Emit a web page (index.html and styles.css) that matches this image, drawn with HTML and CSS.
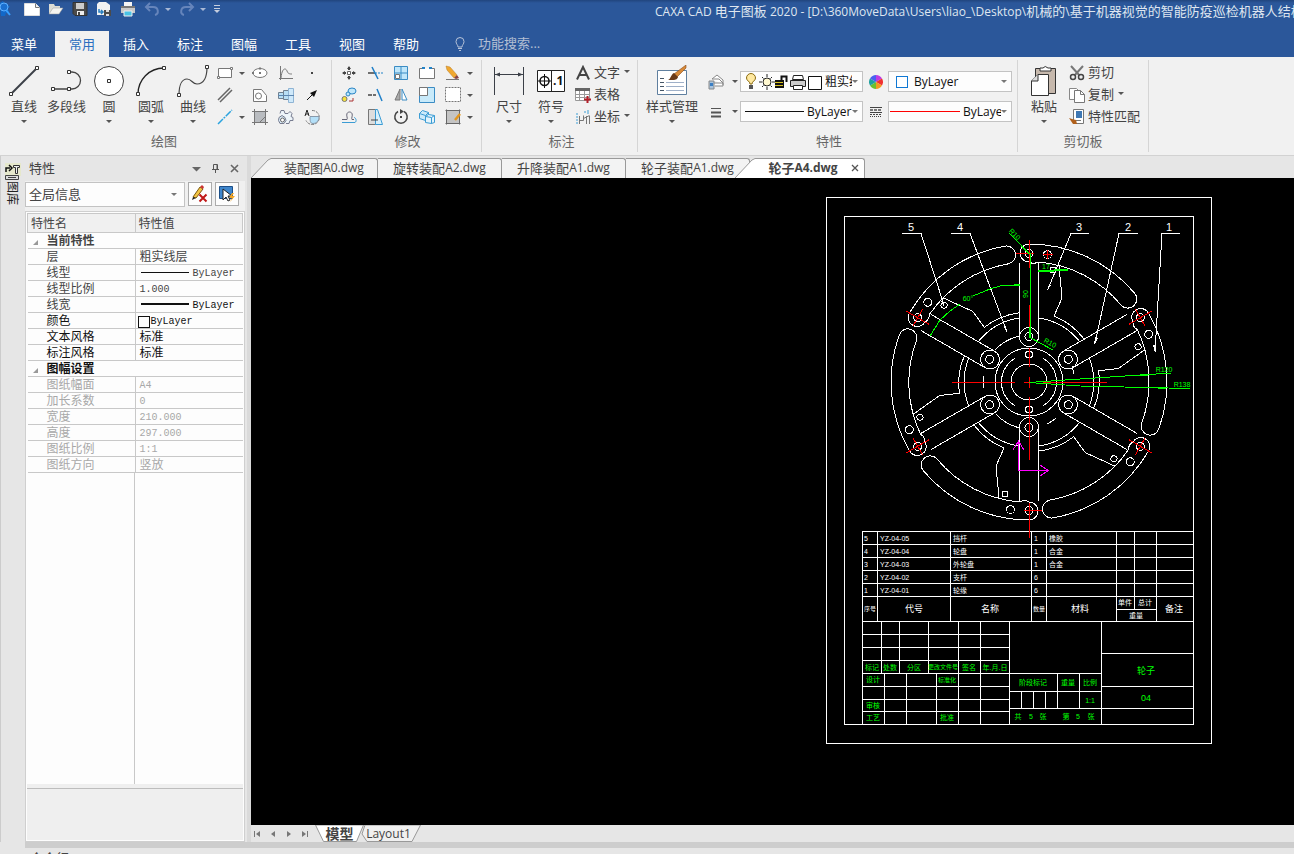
FILE: index.html
```html
<!DOCTYPE html>
<html lang="zh-CN">
<head>
    <meta charset="UTF-8">
    <meta name="viewport" content="width=device-width, initial-scale=1.0">
    <title>CAXA CAD 电子图板 2020</title>
    <link rel="stylesheet" href="styles.css">
</head>
<body>
    <header class="titlebar">
        <div class="title-row">
            <div class="quick">
                <svg class="app-logo" width="12" height="18" viewBox="0 0 12 18"><path d="M0 3l3-2 1 2 3 0 0 2 3 1-2 3 1 3-3 1-1 3-4 0z" fill="#1268c8"/><circle cx="4" cy="7" r="4" fill="#1a6fd0" stroke="#5fb0ff"/><path d="M6 10l4 5" stroke="#39a0ff" stroke-width="2"/></svg>
                <button aria-label="新建"><svg width="16" height="16" viewBox="0 0 16 16"><path d="M.5 2.500h11l4 4v8h-15z" fill="#fff" stroke="#ddd"/><path d="M11.500 2.500v4h4" fill="#eee" stroke="#777"/></svg></button>
                <button aria-label="打开"><svg width="16" height="16" viewBox="0 0 16 16"><path d="M1 13V3h5l1 2h5v2" fill="#dcdcd4"/><path d="M1 13l4-6h10l-4 6z" fill="#f4f4f0" stroke="#999" stroke-width=".5"/></svg></button>
                <button aria-label="保存"><svg width="16" height="16" viewBox="0 0 16 16"><path d="M1 1.500h14v13H3l-2-2z" fill="#4b4b4b" stroke="#333"/><path d="M4 2h8v6H4z" fill="#ccc"/><path d="M5 10h7v4H5z" fill="#eee"/><path d="M6 11h2v3H6z" fill="#444"/></svg></button>
                <button aria-label="另存为"><svg width="16" height="16" viewBox="0 0 16 16"><path d="M3 1h7l4 3v10H1V3z" fill="#f2f2f2"/><path d="M3 8v3h4M5 9l2 2-2 2" fill="none" stroke="#2a7fc0" stroke-width="1.500"/><path d="M8 9h7v6H8z" fill="#4b4b4b"/><path d="M10 9h3v2h-3zM10 13h3v2h-3z" fill="#ddd"/></svg></button>
                <button aria-label="打印"><svg width="16" height="16" viewBox="0 0 16 16"><path d="M4 1h8v5H4z" fill="#f5f5f5"/><path d="M1 5h14v7H1z" fill="#c9c9c9"/><path d="M1 5h14v2H1z" fill="#777"/><path d="M4 10h8v5H4z" fill="#49c3e6" stroke="#eee"/></svg></button>
                <button class="dim" aria-label="撤销"><svg width="16" height="16" viewBox="0 0 16 16"><path d="M6 2L2 6l4 4M2 6h7c6 0 6 7 2 8" fill="none" stroke="#6685bb" stroke-width="2"/></svg><i class="caret light"></i></button>
                <button class="dim" aria-label="恢复"><svg width="16" height="16" viewBox="0 0 16 16"><path d="M10 2l4 4-4 4M14 6H7c-6 0-6 7-2 8" fill="none" stroke="#6685bb" stroke-width="2"/></svg><i class="caret light"></i></button>
                <button class="more" aria-label="自定义"><svg width="6" height="10" viewBox="0 0 6 10"><path d="M0 1.500h6M0 4.500h6" stroke="#c5cede"/><path d="M0 6h6L3 9z" fill="#c5cede"/></svg></button>
            </div>
            <div class="caption"><small>CAXA CAD </small>电子图板<small> 2020 - [D:\360MoveData\Users\liao_\Desktop\</small>机械的<small>\</small>基于机器视觉的智能防疫巡检机器人结构设计</div>
        </div>
        <nav class="menu">
            <button class="menu-file">菜单</button>
            <button class="active">常用</button>
            <button>插入</button>
            <button>标注</button>
            <button>图幅</button>
            <button>工具</button>
            <button>视图</button>
            <button>帮助</button>
            <label class="search">
                <svg width="12" height="14" viewBox="0 0 12 14"><path d="M4 10C4 8 2 7 2 4.500a4 4 0 0 1 8 0C10 7 8 8 8 10zM4 11.500h4M5 13.500h2" fill="none" stroke="#b7c3d9"/></svg>
                <input type="text" placeholder="功能搜索..." aria-label="功能搜索">
            </label>
        </nav>
    </header>

    <section class="ribbon">
        <!-- 绘图 -->
        <div class="group draw">
            <div class="group-body">
                <button class="big"><svg width="32" height="32" viewBox="0 0 32 32"><path d="M3 29L29 3" stroke="#3c4048" stroke-width="2"/><path d="M1.500 27.500h3v3h-3zM27.500 1.500h3v3h-3z" class="node"/></svg><span>直线</span><i class="caret"></i></button>
                <button class="big mid"><svg width="32" height="32" viewBox="0 0 32 32"><path d="M2 24h16M18 7h3a8.500 8.500 0 0 1 0 17h-3" fill="none" stroke="#444" stroke-width="1.300"/><path d="M.5 22.500h3v3h-3zM16.500 22.500h3v3h-3zM16.500 5.500h3v3h-3z" class="node"/></svg><span>多段线</span></button>
                <button class="big"><svg width="32" height="32" viewBox="0 0 32 32"><circle cx="16" cy="16" r="14.500" fill="#fff" stroke="#444"/><path d="M14.500 14.500h3v3h-3z" class="node"/></svg><span>圆</span><i class="caret"></i></button>
                <button class="big"><svg width="32" height="32" viewBox="0 0 32 32"><path d="M3 29C3 15 14 3 29 3" fill="none" stroke="#222" stroke-width="1.300"/><path d="M1.500 27.500h3v3h-3zM27.500 1.500h3v3h-3z" class="node"/></svg><span>圆弧</span><i class="caret"></i></button>
                <button class="big"><svg width="32" height="32" viewBox="0 0 32 32"><path d="M2 30C2 20 5 14 10 14s5 5 10 5c7 0 10-7 10-17" fill="none" stroke="#444" stroke-width="1.200"/><path d="M.5 28.500h3v3h-3zM28.500.5h3v3h-3z" class="node"/></svg><span>曲线</span><i class="caret"></i></button>
                <div class="icons">
                    <button aria-label="矩形"><svg width="16" height="16" viewBox="0 0 16 16"><path d="M1.500 3.500h13v9h-13z" fill="#fff" stroke="#777"/><path d="M.5 11.500h2v2h-2zM13.500 2.500h2v2h-2z" fill="#fff" stroke="#777"/></svg><i class="caret"></i></button>
                    <button aria-label="椭圆"><svg width="16" height="16" viewBox="0 0 16 16"><ellipse cx="8" cy="8" rx="7" ry="4.500" fill="#fff" stroke="#777"/><path d="M7 7h2v2H7zM7 2.500h2v2H7zM0 7h2v2H0z" fill="#777"/></svg></button>
                    <button aria-label="公式曲线"><svg width="16" height="16" viewBox="0 0 16 16"><path d="M2.500 1v14M1 13.500h14M3 13C4 2 8 3 9 6s3 3 5 3" fill="none" stroke="#777"/></svg></button>
                    <button aria-label="点"><svg width="16" height="16" viewBox="0 0 16 16"><path d="M7 7h2v2H7z" fill="#444"/></svg></button>
                    <button aria-label="平行线"><svg width="16" height="16" viewBox="0 0 16 16"><path d="M1 13L13 1M3 15L15 3" stroke="#666" stroke-width="1.500"/></svg></button>
                    <button aria-label="轮廓"><svg width="16" height="16" viewBox="0 0 16 16"><path d="M1.500 2.500h8l5 6v6h-13z" fill="#fff" stroke="#777"/><circle cx="6.500" cy="9" r="3" fill="none" stroke="#777"/></svg></button>
                    <button aria-label="孔轴"><svg width="16" height="16" viewBox="0 0 16 16"><path d="M.5 5.500h5v6h-5zM5.500 3.500h5v9h-5z" fill="#b9dff5" stroke="#708090"/><path d="M10.500 1.500h5v14h-5z" fill="#cfe9fa" stroke="#8fb4d4"/><path d="M0 8.500h16" stroke="#5d86b0"/></svg></button>
                    <button aria-label="箭头"><svg width="16" height="16" viewBox="0 0 16 16"><path d="M3 13l5-5" stroke="#111"/><path d="M13 3l-7 3 4 4z" fill="#111"/></svg></button>
                    <button aria-label="构造线"><svg width="16" height="16" viewBox="0 0 16 16"><path d="M1 15L15 1" stroke="#2aa3df" stroke-width="1.500" stroke-dasharray="7 1 2 1"/></svg><i class="caret"></i></button>
                    <button aria-label="填充"><svg width="16" height="16" viewBox="0 0 16 16"><path d="M2 2h12v12H2z" fill="#b9bcc0"/><path d="M2.500 0v16M13.500 0v16M0 2.500h16M0 13.500h16M8 13L13 8" stroke="#777"/></svg></button>
                    <button aria-label="齿形"><svg width="16" height="16" viewBox="0 0 16 16"><path d="M2 4.500l1-3h3l1 3h3l2-2 2 2-1 3 2 1v3h-3l-1 3h-3" fill="#eef5fa" stroke="#777c90"/><path d="M1 8.500l3-2 3 2 1 3-2 3H2l-1.500-3z" fill="#dceefa" stroke="#777c90"/><circle cx="4.500" cy="11" r="2" fill="#fff" stroke="#666"/></svg></button>
                    <button aria-label="局部放大图"><svg width="16" height="16" viewBox="0 0 16 16"><path d="M8 1.500a7 7 0 1 1-6 10" fill="none" stroke="#777" stroke-dasharray="3 1"/><path d="M6 7.500h9c0 5-3 7-6 7s-3-3-3-7z" fill="#b4e0f8" stroke="#89a"/><path d="M1 7l2-6 2 6M2 5h3" fill="none" stroke="#222"/></svg></button>
                </div>
            </div>
            <div class="group-title">绘图</div>
        </div>

        <!-- 修改 -->
        <div class="group modify">
            <div class="group-body">
                <div class="icons">
                    <button aria-label="平移"><svg width="16" height="16" viewBox="0 0 16 16"><path d="M8 2v3M8 11v3M2 8h3M11 8h3" stroke="#444" stroke-width="2"/><path d="M6 4l2-3 2 3zM6 12l2 3 2-3zM4 6L1 8l3 2zM12 6l3 2-3 2z" fill="#444"/><path d="M6.500 6.500h3v3h-3z" fill="#fff" stroke="#666"/></svg></button>
                    <button aria-label="裁剪"><svg width="16" height="16" viewBox="0 0 16 16"><path d="M1 8h7" stroke="#444" stroke-width="1.500"/><path d="M8 8h8" stroke="#2383c8" stroke-dasharray="2 1"/><path d="M5 2l6 12" stroke="#1f7fc8" stroke-width="1.500"/></svg></button>
                    <button aria-label="阵列"><svg width="16" height="16" viewBox="0 0 16 16"><path d="M1.500 1.500h13v13h-13zM8 1v14M1 8h14" fill="#bfe6fa" stroke="#3b8cc4"/><path d="M2.500 9.500h4v4h-4z" fill="#fff" stroke="#777"/></svg></button>
                    <button aria-label="打断"><svg width="16" height="16" viewBox="0 0 16 16"><path d="M5 3.500H.5v10h15v-10H11" fill="#fff" stroke="#777"/><path d="M3 2h3v2H3zM10 2h3v2h-3z" fill="#2383c8"/></svg></button>
                    <button aria-label="删除"><svg width="16" height="16" viewBox="0 0 16 16"><path d="M1 1l4 1 7 8-3 3-7-8z" fill="#f0a830" stroke="#b97a20" stroke-width=".5"/><path d="M12 10l2 3-3 1-2-1z" fill="#844"/><path d="M1 14.500h13" stroke="#777"/></svg><i class="caret"></i></button>
                    <button aria-label="平移复制"><svg width="16" height="16" viewBox="0 0 16 16"><ellipse cx="11" cy="4" rx="4" ry="3" fill="#bfe6fa" stroke="#2a86c6"/><circle cx="7" cy="7" r="2" fill="#bfe6fa" stroke="#2a86c6"/><circle cx="3.500" cy="12" r="2.500" fill="#f7e23a" stroke="#777"/><path d="M8 14h4v-3" fill="none" stroke="#a33"/></svg></button>
                    <button aria-label="延伸"><svg width="16" height="16" viewBox="0 0 16 16"><path d="M1 8h8" stroke="#444" stroke-width="1.500" stroke-dasharray="4 1"/><path d="M10 2l5 12" stroke="#1f7fc8" stroke-width="1.500"/></svg></button>
                    <button aria-label="镜像"><svg width="16" height="16" viewBox="0 0 16 16"><path d="M7 2v11H2z" fill="#aaa" stroke="#777"/><path d="M9 2v11h5z" fill="#fff" stroke="#3b8cc4"/></svg></button>
                    <button aria-label="缩放"><svg width="16" height="16" viewBox="0 0 16 16"><path d="M.5.5h15v15H.5z" fill="#c8eafa" stroke="#3b8cc4"/><path d="M.5.5h8v8h-8z" fill="#fff" stroke="#777"/></svg></button>
                    <button aria-label="分解"><svg width="16" height="16" viewBox="0 0 16 16"><path d="M.5.5h15v14H.5z" fill="#fff" stroke="#777" stroke-dasharray="2 1"/></svg><i class="caret"></i></button>
                    <button aria-label="等距线"><svg width="16" height="16" viewBox="0 0 16 16"><path d="M1 10.500h5c1-1-1-4 0-6s4-2 5 0-1 5 0 6h2" fill="none" stroke="#667"/><path d="M1 13.500h13c2-1 1-5-1-5" fill="none" stroke="#3b9cd4"/></svg></button>
                    <button aria-label="拉伸"><svg width="16" height="16" viewBox="0 0 16 16"><path d="M1.500.5h7v15h-7z" fill="#ddd" stroke="#777"/><path d="M8.500.5h2l5 15h-7z" fill="#d8f0fc" stroke="#3b9cd4"/><path d="M4 11h7" stroke="#444"/></svg></button>
                    <button aria-label="旋转"><svg width="16" height="16" viewBox="0 0 16 16"><path d="M11 2.500A6.200 6.200 0 1 1 5 2.500" fill="none" stroke="#444" stroke-width="1.500"/><path d="M7 0l4 2.500L7 5z" fill="#444"/><path d="M7 7h2v2H7z" fill="#444"/></svg></button>
                    <button aria-label="块"><svg width="16" height="16" viewBox="0 0 16 16"><path d="M.5 4.500l3-3 6 2v6l-3 2-6-2zM.5 4.500l6 2v5M6.500 6.500l3-3" fill="#cdeafa" stroke="#3b9cd4"/><path d="M6.500 7.500l3-2 6 1v7l-3 1-6-1zM6.500 7.500l6 1v6M12.500 8.500l3-2" fill="#e4f4fc" stroke="#3b9cd4"/></svg></button>
                    <button aria-label="填充编辑"><svg width="16" height="16" viewBox="0 0 16 16"><path d="M2 2h12v12H2z" fill="#c4c4c4"/><path d="M1.500.5v15M14.500.5v15M.5 1.500h15M.5 14.500h15" stroke="#666"/><path d="M15 5l-5 6" stroke="#e2961e" stroke-width="2.500"/></svg><i class="caret"></i></button>
                </div>
            </div>
            <div class="group-title">修改</div>
        </div>

        <!-- 标注 -->
        <div class="group dims">
            <div class="group-body">
                <button class="big"><svg width="32" height="32" viewBox="0 0 32 32"><path d="M1.500 2v28M30.500 2v28M2 9.500h28" stroke="#3c4048"/><path d="M2 9.500l5-2v4zM30 9.500l-5-2v4z" fill="#3c4048"/></svg><span>尺寸</span><i class="caret"></i></button>
                <button class="big"><svg width="32" height="32" viewBox="0 0 32 32"><path d="M2.500 5.500h27v21h-27zM16.500 5v22" fill="#fff" stroke="#222"/><circle cx="9.500" cy="16" r="4.500" fill="none" stroke="#111" stroke-width="1.500"/><path d="M3 16h13M9.500 9v14" stroke="#111"/><text x="18" y="20" class="tol">.1</text></svg><span>符号</span><i class="caret"></i></button>
                <div class="rows">
                    <button><svg width="16" height="16" viewBox="0 0 16 16"><path d="M2 14.500L8 2l6 12.500M4.500 10h7" fill="none" stroke="#444" stroke-width="2"/></svg>文字<i class="caret"></i></button>
                    <button><svg width="16" height="16" viewBox="0 0 16 16"><path d="M.5 1.500h14v12H.5zM.5 7.500h14M.5 10.500h14M4.500 4v9M9.500 4v9" fill="#fff" stroke="#999"/><path d="M0 1h15v3H0z" fill="#666"/><path d="M12.500 9v7M9 12.500h7" stroke="#b3202a" stroke-width="2"/></svg>表格</button>
                    <button><svg width="16" height="16" viewBox="0 0 16 16"><path d="M4.500 7v8M4.500 11.500h4v-5M8.500 9.500l6-3M11.500 7v8M14.500 7v8" fill="none" stroke="#777"/><path d="M2 4v11" stroke="#3b9cd4" stroke-dasharray="2 1"/><path d="M13 1v4M9 3h2" stroke="#3b9cd4"/></svg>坐标<i class="caret"></i></button>
                </div>
            </div>
            <div class="group-title">标注</div>
        </div>

        <!-- 特性 -->
        <div class="group props">
            <div class="group-body">
                <button class="big wide"><svg width="32" height="32" viewBox="0 0 32 32"><path d="M1.500 5.500h29v24h-29z" fill="#fff" stroke="#5f7f9f"/><path d="M4 13.500h4M4 17.500h4M4 21.500h4M4 25.500h4" stroke="#456"/><path d="M10 17.500h18M10 21.500h18M10 25.500h18" stroke="#9fb0c8"/><path d="M30 0l-12 9 3 3 9-9z" fill="#d88a38" stroke="#8a4a18" stroke-width=".6"/><path d="M18 8l4 4c-1 4-6 3-10 3 3-1 3-6 6-7z" fill="#6a3a18"/></svg><span>样式管理</span><i class="caret"></i></button>
                <div class="prop-grid">
                    <button class="with-caret" aria-label="图层"><svg width="16" height="16" viewBox="0 0 16 16"><path d="M4 5l5-4 6 5v5M4 5h7l4 4M6 9h9v3H7" fill="#fff" stroke="#888"/><path d="M1 7h5v8H1z" fill="#aac4dc" stroke="#888"/><path d="M2 9h3v3H2z" fill="#3b7fc4"/></svg><i class="caret"></i></button>
                    <div class="combo">
                        <svg width="80" height="18" viewBox="0 0 80 18">
                            <path d="M5 11C5 8 1.500 8 1.500 5a4.500 4.500 0 0 1 9 0C10.500 8 7 8 7 11z" fill="#ffe9a0" stroke="#8a6a10"/><path d="M4 12h4v4H4z" fill="#555"/>
                            <circle cx="22" cy="9" r="4" fill="#fff8d0" stroke="#222"/><path d="M22 1v3M22 14v3M14 9h3M27 9h3M17 4l1.500 1.500M27 4l-1.500 1.500M17 14l1.500-1.500M27 14l-1.500-1.500" stroke="#222"/>
                            <path d="M30 7h9v8h-9z" fill="#111"/><path d="M30 9.500h8M30 12.500h8" stroke="#d8c020"/><path d="M36.500 7V3.500h5V9" fill="none" stroke="#111" stroke-width="2"/>
                            <path d="M48.500 2.500h9l1 4h-11z" fill="#fff" stroke="#222"/><path d="M45.500 7.500h15v6h-15z" fill="#ccc" stroke="#222"/><path d="M48.500 12.500h9v4h-9z" fill="#fff" stroke="#222"/>
                            <path d="M63.500 3.500h13v13h-13z" fill="#fff" stroke="#111"/>
                        </svg>
                        <select aria-label="当前图层"><option>粗实线层</option></select><i class="caret"></i>
                    </div>
                    <svg class="mid-icon" width="14" height="14" viewBox="0 0 14 14"><path d="M7 7V0a7 7 0 0 1 6 3.500z" fill="#c03be0"/><path d="M7 7l6-3.500a7 7 0 0 1 0 7z" fill="#f03030"/><path d="M7 7l6 3.500A7 7 0 0 1 7 14z" fill="#f39a20"/><path d="M7 7v7a7 7 0 0 1-6-3.500z" fill="#6cc030"/><path d="M7 7l-6 3.500a7 7 0 0 1 0-7z" fill="#20a0a0"/><path d="M7 7L1 3.500A7 7 0 0 1 7 0z" fill="#4a60f0"/></svg>
                    <div class="combo">
                        <i class="swatch"></i>
                        <select aria-label="颜色"><option>ByLayer</option></select><i class="caret"></i>
                    </div>
                    <button class="with-caret" aria-label="线宽"><svg width="16" height="16" viewBox="0 0 16 16"><path d="M3 4.500h10" stroke="#555"/><path d="M3 8.500h10M3 12.500h10" stroke="#555" stroke-width="2"/></svg><i class="caret"></i></button>
                    <div class="combo">
                        <i class="line black"></i>
                        <select aria-label="线宽设置"><option>ByLayer</option></select><i class="caret"></i>
                    </div>
                    <svg class="mid-icon" width="14" height="14" viewBox="0 0 14 14"><path d="M1 2.500h12M1 7.500h12" stroke="#444"/><path d="M1 5h12" stroke="#777" stroke-width="2" stroke-dasharray="3 1"/><path d="M1 9.500h12" stroke="#444" stroke-dasharray="2 1"/><path d="M1 11.500h12" stroke="#444" stroke-dasharray="1 1"/></svg>
                    <div class="combo">
                        <i class="line red"></i>
                        <select aria-label="线型设置"><option>ByLayer</option></select><i class="caret"></i>
                    </div>
                </div>
            </div>
            <div class="group-title">特性</div>
        </div>

        <!-- 剪切板 -->
        <div class="group clip">
            <div class="group-body">
                <button class="big"><svg width="32" height="32" viewBox="0 0 32 32"><path d="M7.500 3.500h20v25h-20z" fill="#c6b8ac" stroke="#333"/><path d="M12 6V3h3q2-3 5 0h3v3z" fill="#fff" stroke="#333"/><path d="M10 9.500h10.500v21h-17V16z" fill="#fff" stroke="#333"/><path d="M10 9.500V16H3.500" fill="#ddd" stroke="#333"/></svg><span>粘贴</span><i class="caret"></i></button>
                <div class="rows">
                    <button><svg width="16" height="16" viewBox="0 0 16 16"><path d="M2 1l9 10M14 1L5 11" stroke="#777" stroke-width="2"/><circle cx="4" cy="12" r="2.500" fill="#eee" stroke="#444" stroke-width="1.500"/><circle cx="12" cy="12" r="2.500" fill="#eee" stroke="#444" stroke-width="1.500"/></svg>剪切</button>
                    <button><svg width="16" height="16" viewBox="0 0 16 16"><path d="M.5 1.500h7l3 3v8H.5z" fill="#fff" stroke="#888"/><path d="M5.500 3.500h6l4 4v8h-10z" fill="#fff" stroke="#777"/><path d="M11.500 3.500v4h4" fill="none" stroke="#777"/></svg>复制<i class="caret"></i></button>
                    <button><svg width="16" height="16" viewBox="0 0 16 16"><path d="M4.500.5h10v14h-10z" fill="#fff" stroke="#777"/><path d="M7 2h6v7H7z" fill="#3f78b4"/><path d="M6 11.500h6" stroke="#777"/><path d="M0 9l3 1 4 1 1 4H4z" fill="#b0601c"/></svg>特性匹配</button>
                </div>
            </div>
            <div class="group-title">剪切板</div>
        </div>
    </section>

    <div class="workspace">
        <aside class="strip">
            <svg width="16" height="18" viewBox="0 0 16 18"><path d="M0 0h16v13H0z" fill="#e6e8cc"/><path d="M1 9V5h4M4 2l3 3-3 3" fill="none" stroke="#111" stroke-width="1.500"/><path d="M8.500 2.500h6v2h-2v6h-2v-6h-2z" fill="#eee" stroke="#333"/><path d="M.5 12.500h13v4H.5zM3 14.500h8" fill="#ddd" stroke="#444"/></svg>
            <span>图库</span>
        </aside>

        <section class="panel">
            <div class="panel-title">
                <span>特性</span>
                <button aria-label="选项"><svg width="9" height="9" viewBox="0 0 9 9"><path d="M0 3h9L4.500 7.500z" fill="#666"/></svg></button>
                <button aria-label="固定"><svg width="9" height="9" viewBox="0 0 9 9"><path d="M2.500 5V.5h4V5M1 5.500h7M4.500 6v3M6 1v4" fill="none" stroke="#555"/></svg></button>
                <button aria-label="关闭"><svg width="9" height="9" viewBox="0 0 9 9"><path d="M1 1l7 7M8 1L1 8" stroke="#666" stroke-width="1.600"/></svg></button>
            </div>
            <div class="panel-tools">
                <div class="combo">
                    <select aria-label="选择对象"><option>全局信息</option></select><i class="caret"></i>
                </div>
                <button aria-label="清除"><svg width="18" height="18" viewBox="0 0 18 18"><path d="M2 12L9 2l3 2L5 13z" fill="#f3c342" stroke="#7a5a10"/><path d="M2 12l-1 3 4-2z" fill="#222"/><path d="M9 2l2-2 2 2-1 2z" fill="#c33"/><path d="M8.500 9.500l7 7M15.500 9.500l-7 7" stroke="#c01818" stroke-width="2"/></svg></button>
                <button aria-label="快速选择"><svg width="18" height="18" viewBox="0 0 18 18"><path d="M1.500 1.500h13v12h-13z" fill="#3f86cc" stroke="#1d4f88"/><path d="M5 4v11l3-3 2 4 2-1-2-4h4z" fill="#fff" stroke="#222"/><path d="M14 8l-3 5h3l-2 4 5-6h-3l2-3z" fill="#f5a623"/></svg></button>
            </div>
            <div class="prop-box">
                <table>
                    <thead>
                        <tr><th>特性名</th><th>特性值</th></tr>
                    </thead>
                    <tbody>
                        <tr class="section first"><td colspan="2"><i></i>当前特性</td></tr>
                        <tr class="soft"><td>层</td><td>粗实线层</td></tr>
                        <tr class="soft"><td>线型</td><td><span class="sample"></span><span class="mono">ByLayer</span></td></tr>
                        <tr class="soft"><td>线型比例</td><td><span class="mono">1.000</span></td></tr>
                        <tr class="soft"><td>线宽</td><td><span class="sample thick"></span><span class="mono dark">ByLayer</span></td></tr>
                        <tr><td>颜色</td><td class="tight"><span class="box"></span><span class="mono">ByLayer</span></td></tr>
                        <tr><td>文本风格</td><td>标准</td></tr>
                        <tr><td>标注风格</td><td>标准</td></tr>
                        <tr class="section"><td colspan="2"><i></i>图幅设置</td></tr>
                        <tr class="off"><td>图纸幅面</td><td><span class="mono">A4</span></td></tr>
                        <tr class="off"><td>加长系数</td><td><span class="mono">0</span></td></tr>
                        <tr class="off"><td>宽度</td><td><span class="mono">210.000</span></td></tr>
                        <tr class="off"><td>高度</td><td><span class="mono">297.000</span></td></tr>
                        <tr class="off"><td>图纸比例</td><td><span class="mono">1:1</span></td></tr>
                        <tr class="off"><td>图纸方向</td><td>竖放</td></tr>
                    </tbody>
                </table>
                <div class="filler"><div></div></div>
                <div class="hint"></div>
            </div>
        </section>

        <div class="splitter"></div>

        <main class="main">
            <div class="doc-tabs">
                <button class="slanted"><svg width="20" height="20" viewBox="0 0 20 20"><path d="M0 20L17 2 20 .5V20z" fill="#f3f3f3"/><path d="M0 20L17 2 20 .5" fill="none" stroke="#999"/></svg><span>装配图<small>A0.dwg</small></span></button>
                <button><span>旋转装配<small>A2.dwg</small></span></button>
                <button><span>升降装配<small>A1.dwg</small></span></button>
                <button><span>轮子装配<small>A1.dwg</small></span></button>
                <button class="slanted current"><svg width="20" height="20" viewBox="0 0 20 20"><path d="M0 20L17 2 20 .5V20z" fill="#fff"/><path d="M0 20L17 2 20 .5" fill="none" stroke="#999"/></svg><span>轮子<small>A4.dwg</small><svg width="8" height="8" viewBox="0 0 8 8"><path d="M1 1l6 6M7 1L1 7" stroke="#555" stroke-width="1.300"/></svg></span></button>
            </div>
            <div class="canvas">
                <svg class="sheet" width="388" height="548" viewBox="825 196 388 548">
                    <defs>
                        <!-- one sixth of the wheel, centre at 0,0 -->
                        <g id="sector">
                            <path d="M0-138A138 138 0 0 1 105.700-88.700A9 9 0 0 1 91.900-77.100A120 120 0 0 0 9-120A9 9 0 0 1 0-120A9 9 0 0 1 0-138"/>
                            <circle cx="0" cy="-128.500" r="4"/>
                            <circle cx="18.500" cy="-127.500" r="4"/>
                            <circle cx="24" cy="-112" r="3"/>
                            <path d="M-9.500-119V-45A9.500 9.500 0 0 0 9.500-45V-119M-9.500-45A9.500 9.500 0 0 1 9.500-45"/>
                            <circle cx="0" cy="-45.500" r="4"/>
                            <path d="M30-116L33-84L25-66A70 70 0 0 1 55-43M10-64A65 65 0 0 1 51-40"/>
                        </g>
                        <path id="mark" d="M0-142V-115M-10-128.500H10"/>
                    </defs>
                    <g class="white">
                        <path d="M826.500 197.500h385v546h-385zM844.500 216.500h349v508h-349z"/>
                        <g transform="translate(1029 382)">
                            <use href="#sector"/>
                            <use href="#sector" transform="rotate(60)"/>
                            <use href="#sector" transform="rotate(120)"/>
                            <use href="#sector" transform="rotate(180)"/>
                            <use href="#sector" transform="rotate(240)"/>
                            <use href="#sector" transform="rotate(300)"/>
                            <circle r="18"/>
                            <circle r="34"/>
                            <path d="M-14-24A28 28 0 0 0-14 24M14-24A28 28 0 0 1 14 24"/>
                            <circle cy="-27.500" r="3.500"/>
                            <circle cy="27.500" r="3.500"/>
                            <path d="M-34-32A47 47 0 0 1-9-46M-33 32A46 46 0 0 0-9 46M-46-6V6M18 42Q24 39 27 36M43-16L45-8"/>
                        </g>
                        <path d="M902 233.500h19L944 305M951 233.500h19L1007 332M1089 233.500h-18L1048 289M1138 233.500h-19L1095 343M1180 233.500h-18L1155 352"/>
                        <path class="tip" d="M944 307l-3-6 2-1zM1007 333l-3-6 2-1zM1047 291l2-7 2 1zM1094 345l1-8 3 1zM1155 353l-2-8h3z"/>
                        <!-- parts list -->
                        <path d="M862.500 724V531.500h331M862.500 544.500h331M862.500 557.500h331M862.500 570.500h331M862.500 583.500h331M862.500 596.500h331M862.500 621.500h331M877.500 531v90M950.500 531v90M1031.500 531v90M1046.500 531v90M1116.500 531v90M1134.500 531v78M1156.500 531v90M1116.500 609.500h40"/>
                        <!-- title block -->
                        <path d="M862.500 634.500h147M862.500 647.500h147M862.500 660.500h147M862.500 673.500h239M862.500 686.500h147M862.500 699.500h147M862.500 711.500h147M881.500 621v52M899.500 621v52M928.500 621v52M958.500 621v103M980.500 621v103M1009.500 621v103M884.500 673v51M906.500 673v51M936.500 673v51"/>
                        <path d="M1101.500 621v103M1009.500 691.500h92M1009.500 708.500h184M1057.500 673v35M1079.500 673v35M1021.500 691v17M1033.500 691v17M1045.500 691v17M1101.500 653.500h92M1101.500 686.500h92"/>
                    </g>
                    <g class="red">
                        <g transform="translate(1029 382)">
                            <use href="#mark" transform="rotate(60)"/>
                            <use href="#mark" transform="rotate(120)"/>
                            <use href="#mark" transform="rotate(240)"/>
                            <use href="#mark" transform="rotate(300)"/>
                        </g>
                        <path d="M952 382.500h63M1024 382.500h11M1043 382.500h64M1029.500 240v28M1029.500 305v32M1029.500 348v19M1029.500 377v11M1029.500 397v63M1029.500 503v35M1016 253.500h18M1024 510.500h18M1043 254.500h10M1047.500 250v9"/>
                    </g>
                    <g class="green">
                        <path d="M1009 233L1029.500 254M1030.500 253v85M930 336L940 320L950 311L960 304M973 296L990 289L1000 286L1019 285M1029 337L1053 350M1029 382.500L1080 379L1171 373M1029 382.500L1080 386L1190 388.500"/>
                        <path class="bold" d="M1038 270.500h16M1054 269.500h14M1030 327v10M1140 374.500h8M1158 388h8M1014 284.500h6"/>
                    </g>
                    <g class="magenta">
                        <path d="M1018.500 441V470.500H1048M1013 450L1018.500 441L1024 450M1040 465L1048.500 470.500L1040 476"/>
                    </g>
                    <g class="cad num">
                        <text x="911" y="231">5</text><text x="960" y="231">4</text><text x="1079" y="231">3</text><text x="1128" y="231">2</text><text x="1169" y="231">1</text>
                    </g>
                    <g class="cad lime">
                        <text transform="translate(1013 236) rotate(45)">R10</text>
                        <text transform="translate(1028 294) rotate(-90)">90</text>
                        <text x="968" y="301">60°</text>
                        <text x="1046" y="269">17</text>
                        <text transform="translate(1049 345) rotate(28)">R10</text>
                        <text x="1164" y="372">R120</text>
                        <text x="1182" y="387">R138</text>
                    </g>
                    <g class="cad left">
                        <text x="864" y="541">5</text><text x="880" y="541">YZ-04-05</text><text x="953" y="541">挡杆</text><text x="1034" y="541">1</text><text x="1049" y="541">橡胶</text>
                        <text x="864" y="554">4</text><text x="880" y="554">YZ-04-04</text><text x="953" y="554">轮盘</text><text x="1034" y="554">1</text><text x="1049" y="554">合金</text>
                        <text x="864" y="567">3</text><text x="880" y="567">YZ-04-03</text><text x="953" y="567">外轮盘</text><text x="1034" y="567">1</text><text x="1049" y="567">合金</text>
                        <text x="864" y="580">2</text><text x="880" y="580">YZ-04-02</text><text x="953" y="580">支杆</text><text x="1034" y="580">6</text>
                        <text x="864" y="593">1</text><text x="880" y="593">YZ-04-01</text><text x="953" y="593">轮缘</text><text x="1034" y="593">6</text>
                    </g>
                    <g class="cad">
                        <text class="tiny" x="870" y="611">序号</text><text class="tiny" x="1039" y="611">数量</text><text x="1125" y="605">单件</text><text x="1145" y="605">总计</text><text x="1136" y="618">重量</text>
                    </g>
                    <g class="cad head">
                        <text x="914" y="612">代号</text><text x="990" y="612">名称</text><text x="1080" y="612">材料</text><text x="1174" y="612">备注</text>
                    </g>
                    <g class="cad lime">
                        <text x="872" y="670">标记</text><text x="890" y="670">处数</text><text x="914" y="670">分区</text><text class="tiny" x="943" y="669">更改文件号</text><text x="969" y="670">签名</text><text x="995" y="670">年.月.日</text>
                        <text x="873" y="682">设计</text><text class="tiny" x="947" y="682">标准化</text><text x="873" y="708">审核</text><text x="873" y="720">工艺</text><text x="947" y="720">批准</text>
                        <text x="1033" y="685">阶段标记</text><text x="1068" y="685">重量</text><text x="1090" y="685">比例</text><text x="1090" y="703">1:1</text>
                        <text x="1018" y="719">共</text><text x="1031" y="719">5</text><text x="1043" y="719">张</text><text x="1066" y="719">第</text><text x="1078" y="719">5</text><text x="1091" y="719">张</text>
                    </g>
                    <g class="cad head lime">
                        <text x="1146" y="674">轮子</text><text x="1146" y="701">04</text>
                    </g>
                </svg>
            </div>
            <div class="layout-tabs">
                <button aria-label="第一个"><svg width="8" height="8" viewBox="0 0 8 8"><path d="M1.500 1v6" stroke="#777"/><path d="M7 1v6L3 4z" fill="#777"/></svg></button>
                <button aria-label="上一个"><svg width="8" height="8" viewBox="0 0 8 8"><path d="M6 1v6L2 4z" fill="#777"/></svg></button>
                <button aria-label="下一个"><svg width="8" height="8" viewBox="0 0 8 8"><path d="M2 1v6l4-3z" fill="#777"/></svg></button>
                <button aria-label="最后一个"><svg width="8" height="8" viewBox="0 0 8 8"><path d="M6.500 1v6" stroke="#777"/><path d="M1 1v6l4-3z" fill="#777"/></svg></button>
                <button class="sheet-tab current"><svg viewBox="0 0 49 17" preserveAspectRatio="none"><path d="M.5 0l8 16.500h33L48.500 0z" fill="#fff" stroke="#999"/></svg><span>模型</span></button>
                <button class="sheet-tab"><svg viewBox="0 0 60 17" preserveAspectRatio="none"><path d="M1 9l5 7.500h45L59.500 0H4L1 9" fill="#f0f0f0" stroke="#999"/></svg><span>Layout1</span></button>
            </div>
        </main>
    </div>

    <footer class="status"><span>命令行:</span></footer>
</body>
</html>
```

FILE: styles.css
```css
* {
    box-sizing: border-box;
}
body {
    margin: 0;
    height: 100vh;
    overflow: hidden;
    display: flex;
    flex-direction: column;
    background-color: #e6e6e6;
    color: #444;
    font-family: "Open Sans", "Noto Sans CJK SC", sans-serif;
    font-size: 13px;
}
button, select, input {
    font: inherit;
    color: inherit;
    background: none;
    border: none;
    border-radius: 0;
    padding: 0;
    margin: 0;
}
button {
    cursor: pointer;
    white-space: nowrap;
}
small {
    font-size: 12px;
    white-space: pre;
}
svg {
    display: block;
    flex: none;
}
.caret {
    flex: none;
    width: 0;
    height: 0;
    border: 3px solid transparent;
    border-top-color: #555;
    border-bottom: none;
}
.caret.light {
    border-top-color: #a9b9d6;
}

/* title bar */
.titlebar {
    flex: none;
    background-color: #2b579a;
    color: #fff;
    overflow: hidden;
}
.title-row {
    display: flex;
    height: 31px;
    background: linear-gradient(#21457e, #2b579a 3px);
}
.quick {
    flex: 0 0 655px;
    display: flex;
    align-items: center;
    height: 18px;
}
.quick button {
    display: flex;
    align-items: center;
    width: 24px;
}
.quick .app-logo {
    margin-right: 12px;
}
.quick .dim {
    width: 35px;
    gap: 5px;
}
.quick .more {
    width: 10px;
}
.caption {
    color: #dfe6f0;
    line-height: 23px;
    white-space: nowrap;
}
.menu {
    display: flex;
    height: 26px;
}
.menu button {
    width: 54px;
    padding-bottom: 2px;
}
.menu .menu-file {
    width: 55px;
    padding-right: 7px;
}
.menu .active {
    background-color: #f1f1f1;
    color: #2a6fc0;
}
.search {
    display: flex;
    align-items: center;
    gap: 12px;
    margin-left: 21px;
}
.search input {
    width: 120px;
    padding-bottom: 2px;
    outline: none;
}
.search input::placeholder {
    color: #b3bfd3;
    opacity: 1;
}

/* ribbon */
.ribbon {
    flex: none;
    display: flex;
    padding: 3px 0;
    background-color: #f1f1f1;
    border-bottom: 1px solid #d2d2d2;
}
.group {
    border-right: 1px solid #d5d5d5;
    padding-top: 2px;
}
.group-body {
    display: flex;
    height: 66px;
    margin-bottom: 4px;
}
.group-title {
    line-height: 19px;
    height: 20px;
    text-align: center;
    color: #666;
}
.draw {
    padding-left: 3px;
    padding-right: 6px;
}
.modify {
    padding-left: 4px;
    padding-right: 2px;
}
.dims {
    padding-left: 6px;
    padding-right: 2px;
}
.props {
    padding-left: 8px;
    padding-right: 5px;
}
.clip {
    padding-left: 5px;
    padding-right: 5px;
}
.big {
    width: 42px;
    padding-top: 3px;
    display: flex;
    flex-direction: column;
    align-items: center;
}
.big.mid {
    width: 43px;
}
.big.wide {
    width: 52px;
}
.big span {
    line-height: 18px;
    margin-bottom: 5px;
}
.node {
    fill: #fff;
    stroke: #333;
}
.tol {
    font: bold 12px "Open Sans", sans-serif;
    fill: #111;
}
.icons {
    display: grid;
    grid-auto-rows: 22px;
}
.draw .icons {
    grid-template-columns: 33px 26px 26px 26px;
}
.modify .icons {
    grid-template-columns: 26px 26px 26px 26px 39px;
}
.icons button {
    display: flex;
    align-items: center;
    gap: 6px;
    padding-left: 5px;
}
.draw .icons button:nth-child(4n+1) {
    padding-left: 3px;
}
.rows {
    display: grid;
    grid-auto-rows: 22px;
}
.rows button {
    display: flex;
    align-items: center;
    gap: 3px;
    padding-bottom: 3px;
}
.rows svg {
    margin-top: 3px;
}
.dims .rows {
    width: 63px;
    padding-left: 3px;
}
.clip .rows {
    width: 78px;
    padding-left: 4px;
}
.rows .caret {
    margin-left: 1px;
}
.prop-grid {
    display: grid;
    grid-template-columns: 34px 123px 25px 124px;
    grid-auto-rows: 21px;
    row-gap: 9px;
    padding: 9px 0 0 8px;
}
.with-caret {
    display: flex;
    align-items: center;
    gap: 8px;
    padding-left: 2px;
}
.mid-icon {
    align-self: center;
    justify-self: center;
}
.combo {
    display: flex;
    align-items: center;
    min-width: 0;
    padding: 0 4px;
    background-color: #fdfdfd;
    border: 1px solid #c3c3c3;
}
.combo select {
    flex: 1;
    min-width: 0;
    appearance: none;
    color: #111;
    font-size: 12px;
    outline: none;
}
.combo .caret {
    border-top-color: #777;
}
.combo .line {
    width: 59px;
    height: 1px;
    margin-right: 3px;
    background-color: #111;
}
.combo .line.red {
    width: 70px;
    margin-left: -3px;
    background-color: #f00;
}
.swatch {
    width: 12px;
    height: 12px;
    margin: 0 6px 0 3px;
    border: 1px solid #0f78d4;
    background-color: #fff;
}

/* work area */
.workspace {
    flex: 1;
    min-height: 0;
    display: flex;
}
.strip {
    flex: 0 0 25px;
    padding: 7px 0 0 4px;
    border-left: 1px solid #ccc;
}
.strip span {
    display: block;
    width: 14px;
    line-height: 14px;
    font-size: 12px;
    color: #222;
    writing-mode: vertical-rl;
    text-orientation: sideways;
}
.panel {
    flex: 0 0 220px;
    display: flex;
    flex-direction: column;
}
.panel-title {
    display: flex;
    align-items: center;
    gap: 10px;
    height: 25px;
    padding: 0 6px 0 4px;
}
.panel-title span {
    flex: 1;
    padding-bottom: 3px;
}
.panel-tools {
    display: flex;
    gap: 3px;
    height: 30px;
    padding: 1px 6px 4px 0;
    background-color: #f0f0f0;
}
.panel-tools .combo {
    flex: 1;
    padding: 0 7px 0 3px;
}
.panel-tools .combo select {
    padding-bottom: 2px;
    font-size: 13px;
    color: #444;
}
.panel-tools button {
    width: 24px;
    height: 24px;
    display: flex;
    align-items: center;
    justify-content: center;
    border: 1px solid #ababab;
    background-color: #fdfdfd;
}
.prop-box {
    flex: 1;
    min-height: 0;
    display: flex;
    flex-direction: column;
    padding: 1px;
    background-color: #fdfdfd;
    border: 1px solid #cfcfcf;
}
.prop-box table {
    width: 100%;
    table-layout: fixed;
    border-collapse: collapse;
    font-family: "Liberation Mono", "Noto Sans CJK SC", monospace;
    font-size: 12px;
    line-height: 12px;
    color: #111;
}
.prop-box th {
    height: 19px;
    padding: 3px 3px 0;
    text-align: left;
    font-weight: normal;
    color: #444;
    background-color: #f0f0f0;
    border: 1px solid #c8c8c8;
}
.prop-box td {
    height: 16px;
    padding: 2px 4px 0;
    white-space: nowrap;
    border-bottom: 1px solid #c8c8c8;
}
.prop-box td:first-child {
    padding-left: 19px;
    border-right: 1px solid #c8c8c8;
}
.prop-box .section td {
    padding-left: 5px;
    border-right: none;
    font-weight: bold;
}
.section i {
    display: inline-block;
    margin-right: 9px;
    border-left: 5px solid transparent;
    border-bottom: 5px solid #999;
}
.section.first, .soft {
    color: #444;
}
.off {
    color: #a8a8a8;
}
.mono {
    font-size: 10px;
}
.dark {
    color: #111;
}
.sample {
    display: inline-block;
    width: 48px;
    height: 1px;
    margin: 0 4px 0 1px;
    vertical-align: 3px;
    background-color: #111;
}
.sample.thick {
    height: 2px;
}
.prop-box .tight {
    padding-left: 2px;
}
.box {
    display: inline-block;
    width: 12px;
    height: 12px;
    margin: -2px 1px -2px 0;
    vertical-align: -2px;
    border: 1px solid #111;
}
.filler {
    flex: 1;
    display: flex;
    border-bottom: 4px solid #efefef;
}
.filler div {
    width: 50%;
    border-right: 1px solid #c8c8c8;
}
.hint {
    height: 52px;
    background-color: #efefef;
    border-top: 1px solid #bdbdbd;
}
.splitter {
    flex: 0 0 6px;
    border-right: 4px solid #dadada;
}
.main {
    flex: 1;
    min-width: 0;
    display: flex;
    flex-direction: column;
}
.doc-tabs {
    display: flex;
    padding-top: 2px;
}
.doc-tabs button {
    display: flex;
    height: 20px;
    width: 124px;
}
.doc-tabs .slanted {
    width: 127px;
}
.doc-tabs span {
    flex: 1;
    display: flex;
    align-items: center;
    justify-content: center;
    height: 20px;
    padding-bottom: 2px;
    background-color: #f3f3f3;
    border-top: 1px solid #999;
    border-right: 1px solid #999;
    border-top-right-radius: 3px;
}
.doc-tabs .current {
    width: 130px;
    margin-left: -15px;
    font-weight: bold;
}
.doc-tabs .current span {
    padding-left: 8px;
    background-color: #fff;
}
.doc-tabs span svg {
    margin-left: 13px;
}
.canvas {
    flex: 1;
    min-height: 0;
    display: flex;
    justify-content: flex-end;
    padding: 18px 81px 0 0;
    background-color: #000;
    overflow: hidden;
}
.layout-tabs {
    display: flex;
    align-items: center;
    height: 17px;
    padding-left: 2px;
}
.layout-tabs button {
    width: 16px;
}
.layout-tabs .sheet-tab {
    position: relative;
    width: 60px;
    height: 17px;
    margin-left: -3px;
    padding-right: 5px;
    line-height: 15px;
    font-size: 12px;
}
.layout-tabs .sheet-tab.current {
    width: 49px;
    margin-left: -2px;
    padding-right: 0;
    z-index: 1;
    font-size: 14px;
    font-weight: bold;
    line-height: 12px;
}
.sheet-tab svg {
    position: absolute;
    inset: 0;
    width: 100%;
    height: 100%;
}
.sheet-tab span {
    position: relative;
}

/* drawing */
.sheet path, .sheet circle {
    fill: none;
    shape-rendering: crispEdges;
}
.white {
    stroke: #fff;
}
.red {
    stroke: #f00;
}
.green {
    stroke: #0f0;
}
.magenta {
    stroke: #f0f;
}
.sheet .tip {
    fill: #fff;
    stroke: none;
}
.bold {
    stroke-width: 2px;
}
.cad {
    fill: #fff;
    font-family: "Liberation Sans", "Noto Sans CJK SC", sans-serif;
    font-size: 7px;
    text-anchor: middle;
}
.cad.left {
    text-anchor: start;
}
.cad.num {
    font-size: 11px;
}
.cad.head {
    font-size: 9px;
}
.cad.lime {
    fill: #0f0;
}
.cad .tiny {
    font-size: 6px;
}

/* status bar */
.status {
    flex: none;
    height: 12px;
    margin-left: 25px;
    padding-left: 5px;
    border-top: 6px solid #cdcdcd;
    overflow: hidden;
    line-height: 20px;
}
```
